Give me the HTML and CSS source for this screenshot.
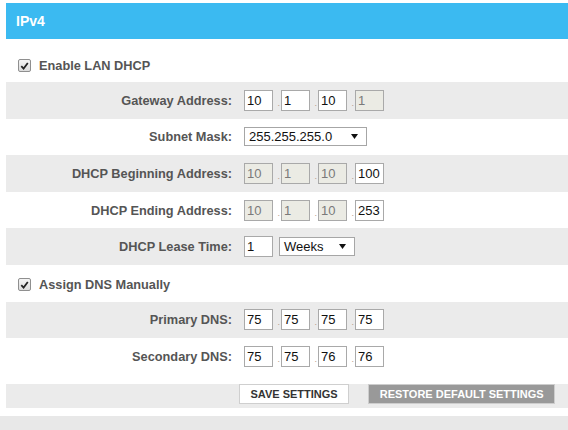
FILE: index.html
```html
<!DOCTYPE html>
<html lang="en">
<head>
    <meta charset="UTF-8">
    <title>LAN Setup - IPv4</title>
    <link rel="stylesheet" href="styles.css">
</head>
<body>
    <div class="panel">
        <div class="panel-head">IPv4</div>

        <div class="check-row first">
            <span class="checkbox"><svg viewBox="0 0 12 12" width="12" height="12"><path d="M2.5 6.2 L5 8.8 L9.6 2.8" fill="none" stroke="#222" stroke-width="1.9"/></svg></span>
            <span class="check-label">Enable LAN DHCP</span>
        </div>

        <div class="form-row alt">
            <label>Gateway Address:</label>
            <div class="ip">
                <input type="text" value="10"><span class="dot">.</span>
                <input type="text" value="1"><span class="dot">.</span>
                <input type="text" value="10"><span class="dot">.</span>
                <input type="text" value="1" disabled>
            </div>
        </div>

        <div class="form-row">
            <label>Subnet Mask:</label>
            <div class="ip">
                <span class="select mask">255.255.255.0<svg viewBox="0 0 7 5" width="7" height="5"><path d="M0 0 H7 L3.5 5 Z" fill="#111"/></svg></span>
            </div>
        </div>

        <div class="form-row alt">
            <label>DHCP Beginning Address:</label>
            <div class="ip">
                <input type="text" value="10" disabled><span class="dot">.</span>
                <input type="text" value="1" disabled><span class="dot">.</span>
                <input type="text" value="10" disabled><span class="dot">.</span>
                <input type="text" value="100">
            </div>
        </div>

        <div class="form-row">
            <label>DHCP Ending Address:</label>
            <div class="ip">
                <input type="text" value="10" disabled><span class="dot">.</span>
                <input type="text" value="1" disabled><span class="dot">.</span>
                <input type="text" value="10" disabled><span class="dot">.</span>
                <input type="text" value="253">
            </div>
        </div>

        <div class="form-row alt">
            <label>DHCP Lease Time:</label>
            <div class="ip lease">
                <input type="text" value="1">
                <span class="select weeks">Weeks<svg viewBox="0 0 7 5" width="7" height="5"><path d="M0 0 H7 L3.5 5 Z" fill="#111"/></svg></span>
            </div>
        </div>

        <div class="check-row">
            <span class="checkbox"><svg viewBox="0 0 12 12" width="12" height="12"><path d="M2.5 6.2 L5 8.8 L9.6 2.8" fill="none" stroke="#222" stroke-width="1.9"/></svg></span>
            <span class="check-label">Assign DNS Manually</span>
        </div>

        <div class="form-row alt">
            <label>Primary DNS:</label>
            <div class="ip">
                <input type="text" value="75"><span class="dot">.</span>
                <input type="text" value="75"><span class="dot">.</span>
                <input type="text" value="75"><span class="dot">.</span>
                <input type="text" value="75">
            </div>
        </div>

        <div class="form-row">
            <label>Secondary DNS:</label>
            <div class="ip">
                <input type="text" value="75"><span class="dot">.</span>
                <input type="text" value="75"><span class="dot">.</span>
                <input type="text" value="76"><span class="dot">.</span>
                <input type="text" value="76">
            </div>
        </div>

        <div class="button-bar">
            <button class="btn btn-save">SAVE SETTINGS</button>
            <button class="btn btn-restore">RESTORE DEFAULT SETTINGS</button>
        </div>
    </div>

    <div class="footer-band"></div>
</body>
</html>
```

FILE: styles.css
```css
* {
    margin: 0;
    padding: 0;
    box-sizing: border-box;
}

body {
    font-family: 'Liberation Sans', Arial, Helvetica, sans-serif;
    background: #fff;
    color: #555;
    overflow: hidden;
}

.panel {
    margin: 3px 0 0 6px;
}

.panel-head {
    height: 36px;
    line-height: 36px;
    padding-left: 10px;
    background: #3bbaf1;
    color: #fff;
    font-size: 14px;
    font-weight: bold;
}

/* checkbox rows */
.check-row {
    display: flex;
    align-items: center;
    gap: 8px;
    height: 36.6px;
    padding: 3px 0 0 12px;
}

.check-row.first {
    height: 36px;
    margin-top: 7px;
}

.checkbox {
    width: 13px;
    height: 13px;
    border: 1px solid #8f8f8f;
    border-radius: 2px;
    background: linear-gradient(#f4f4f4, #dcdcdc);
    display: flex;
    align-items: center;
    justify-content: center;
}

.check-label {
    font-size: 12.75px;
    font-weight: bold;
    color: #555;
}

/* label / field rows */
.form-row {
    display: grid;
    grid-template-columns: 226px auto;
    column-gap: 12px;
    align-items: center;
    height: 36.6px;
}

.form-row.alt {
    background: #ebebeb;
}

.form-row label {
    text-align: right;
    font-size: 12.75px;
    font-weight: bold;
    color: #555;
}

.ip {
    display: flex;
    align-items: center;
}

.ip input {
    width: 29px;
    height: 21px;
    border: 1px solid #a9a9a9;
    background: #fff;
    padding: 0 2px;
    font-family: 'Liberation Sans', Arial, sans-serif;
    font-size: 13px;
    color: #111;
    outline: none;
}

.ip input:disabled {
    background: #ebebe4;
    color: #7a7a7a;
}

.dot {
    width: 8px;
    align-self: flex-end;
    padding: 0 1px 3px 0;
    text-align: right;
    font-size: 9px;
    line-height: 9px;
    color: #b39b8a;
}

.select {
    height: 19px;
    border: 1px solid #a6a6a6;
    background: #fff;
    display: flex;
    align-items: center;
    justify-content: space-between;
    padding: 0 8px 0 4px;
    font-size: 13px;
    color: #111;
}

.select.mask {
    width: 123px;
}

.select.weeks {
    width: 76px;
}

.lease {
    gap: 6px;
}

/* buttons */
.button-bar {
    margin-top: 9px;
    height: 24px;
    background: #ebebeb;
    display: flex;
    align-items: flex-start;
    gap: 19px;
    padding-left: 233px;
}

.btn {
    height: 20px;
    padding: 0 10.5px;
    font-family: 'Liberation Sans', Arial, sans-serif;
    font-size: 11px;
    font-weight: bold;
    cursor: pointer;
}

.btn-save {
    background: #fff;
    border: 1px solid #cfcfcf;
    color: #333;
}

.btn-restore {
    background: #999;
    border: 1px solid #cdcdcd;
    color: #fff;
}

.footer-band {
    margin-top: 8px;
    height: 14px;
    background: #e8e8e8;
}
```
